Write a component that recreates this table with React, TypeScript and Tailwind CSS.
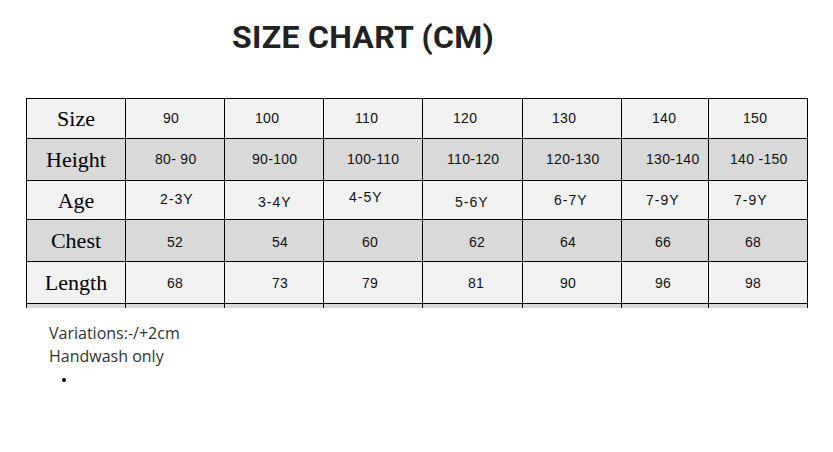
const rows = [
  {
    label: 'Size',
    bg: 'bg-[#f2f2f2]',
    h: 'h-[39px]',
    track: 'tracking-[0.3px]',
    cells: [
      { t: '90', c: 'pl-[37px]' },
      { t: '100', c: 'pl-[30px]' },
      { t: '110', c: 'pl-[31px]' },
      { t: '120', c: 'pl-[30px]' },
      { t: '130', c: 'pl-[29px]' },
      { t: '140', c: 'pl-[30px]' },
      { t: '150', c: 'pl-[34px]' },
    ],
  },
  {
    label: 'Height',
    bg: 'bg-[#d9d9d9]',
    h: 'h-[41px]',
    track: 'tracking-[0.3px]',
    cells: [
      { t: '80- 90', c: 'pl-[29px]' },
      { t: '90-100', c: 'pl-[27px]' },
      { t: '100-110', c: 'pl-[23px]' },
      { t: '110-120', c: 'pl-[24px]' },
      { t: '120-130', c: 'pl-[23px]' },
      { t: '130-140', c: 'pl-[24px]' },
      { t: '140 -150', c: 'pl-[21px]' },
    ],
  },
  {
    label: 'Age',
    bg: 'bg-[#f2f2f2]',
    h: 'h-[38px]',
    track: 'tracking-[1px]',
    cells: [
      { t: '2-3Y', c: 'pl-[34px] -translate-y-[1px]' },
      { t: '3-4Y', c: 'pl-[33px] translate-y-[2px]' },
      { t: '4-5Y', c: 'pl-[25px] -translate-y-[3px]' },
      { t: '5-6Y', c: 'pl-[32px] translate-y-[2px]' },
      { t: '6-7Y', c: 'pl-[31px]' },
      { t: '7-9Y', c: 'pl-[24px]' },
      { t: '7-9Y', c: 'pl-[25px]' },
    ],
  },
  {
    label: 'Chest',
    bg: 'bg-[#d9d9d9]',
    h: 'h-[41px]',
    track: 'tracking-[0.3px]',
    cells: [
      { t: '52', c: 'pl-[41px] translate-y-[2px]' },
      { t: '54', c: 'pl-[47px] translate-y-[2px]' },
      { t: '60', c: 'pl-[38px] translate-y-[2px]' },
      { t: '62', c: 'pl-[46px] translate-y-[2px]' },
      { t: '64', c: 'pl-[37px] translate-y-[2px]' },
      { t: '66', c: 'pl-[33px] translate-y-[2px]' },
      { t: '68', c: 'pl-[36px] translate-y-[2px]' },
    ],
  },
  {
    label: 'Length',
    bg: 'bg-[#f2f2f2]',
    h: 'h-[41px]',
    track: 'tracking-[0.3px]',
    cells: [
      { t: '68', c: 'pl-[41px] translate-y-[1px]' },
      { t: '73', c: 'pl-[47px] translate-y-[1px]' },
      { t: '79', c: 'pl-[38px] translate-y-[1px]' },
      { t: '81', c: 'pl-[45px] translate-y-[1px]' },
      { t: '90', c: 'pl-[37px] translate-y-[1px]' },
      { t: '96', c: 'pl-[33px] translate-y-[1px]' },
      { t: '98', c: 'pl-[36px] translate-y-[1px]' },
    ],
  },
]

export default function App() {
  return (
    <div className="w-[833px] h-[452px] bg-white overflow-hidden">
      {/* Title */}
      <div className="pl-[232px] pt-[18px] h-[98px]">
        <h1 className="text-[32px] leading-[38px] font-bold text-[#222] tracking-[0.3px] font-['Roboto',sans-serif]">
          SIZE CHART (CM)
        </h1>
      </div>

      {/* Size table, cut off at the bottom */}
      <div className="ml-[26px] w-[782px] h-[210px] overflow-hidden bg-black pt-px px-px">
        <div className="grid grid-cols-[98px_98px_98px_98px_99px_98px_86px_98px] gap-px">
          {rows.map(r => (
            <div key={r.label} className="contents">
              <div className={`${r.bg} ${r.h} flex items-center justify-center text-[22px] text-black font-['Liberation_Serif',serif]`}>
                {r.label}
              </div>
              {r.cells.map((c, i) => (
                <div key={i} className={`${r.bg} ${r.h} ${r.track} flex items-center text-[14px] text-[#111] font-['Liberation_Sans',Arial,sans-serif]`}>
                  <span className={`block ${c.c}`}>{c.t}</span>
                </div>
              ))}
            </div>
          ))}
          {Array.from({ length: 8 }).map((_, i) => (
            <div key={i} className="bg-[#d9d9d9] h-[10px]" />
          ))}
        </div>
      </div>

      {/* Notes */}
      <div className="pl-[49px] pt-[14px] text-[16px] leading-[23px] text-[#333] font-['Open_Sans',sans-serif]">
        <p>Variations:-/+2cm</p>
        <p>Handwash only</p>
        <div className="pl-[13px] pt-[10px]">
          <div className="w-[4px] h-[4px] rounded-full bg-black" />
        </div>
      </div>
    </div>
  )
}
